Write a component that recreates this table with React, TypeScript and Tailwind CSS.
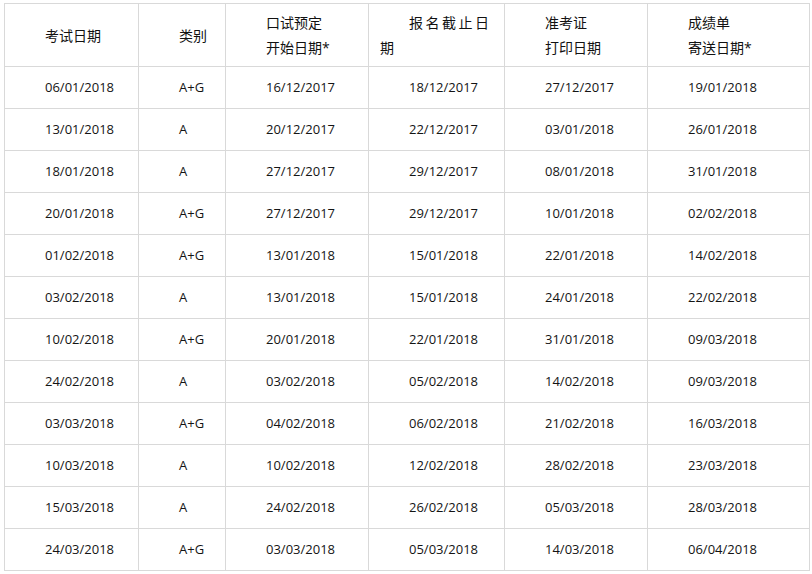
const rows = [
  ["06/01/2018", "A+G", "16/12/2017", "18/12/2017", "27/12/2017", "19/01/2018"],
  ["13/01/2018", "A", "20/12/2017", "22/12/2017", "03/01/2018", "26/01/2018"],
  ["18/01/2018", "A", "27/12/2017", "29/12/2017", "08/01/2018", "31/01/2018"],
  ["20/01/2018", "A+G", "27/12/2017", "29/12/2017", "10/01/2018", "02/02/2018"],
  ["01/02/2018", "A+G", "13/01/2018", "15/01/2018", "22/01/2018", "14/02/2018"],
  ["03/02/2018", "A", "13/01/2018", "15/01/2018", "24/01/2018", "22/02/2018"],
  ["10/02/2018", "A+G", "20/01/2018", "22/01/2018", "31/01/2018", "09/03/2018"],
  ["24/02/2018", "A", "03/02/2018", "05/02/2018", "14/02/2018", "09/03/2018"],
  ["03/03/2018", "A+G", "04/02/2018", "06/02/2018", "21/02/2018", "16/03/2018"],
  ["10/03/2018", "A", "10/02/2018", "12/02/2018", "28/02/2018", "23/03/2018"],
  ["15/03/2018", "A", "24/02/2018", "26/02/2018", "05/03/2018", "28/03/2018"],
  ["24/03/2018", "A+G", "03/03/2018", "05/03/2018", "14/03/2018", "06/04/2018"],
];

const th = "border border-[#d9d9d9] pl-[40px] pr-2 text-left font-normal align-middle leading-[25px]";
const td = "border border-[#d9d9d9] pl-[40px] pr-2 text-left align-middle";

export default function App() {
  return (
    <div className="min-h-[574px] bg-white pt-[3px] pl-[4px] font-['Open_Sans','Noto_Sans_CJK_SC',sans-serif] text-[#111]">
      <table className="w-[805px] table-fixed border-collapse">
        <colgroup>
          <col className="w-[134px]" />
          <col className="w-[87px]" />
          <col className="w-[143px]" />
          <col className="w-[136px]" />
          <col className="w-[143px]" />
          <col className="w-[162px]" />
        </colgroup>
        <thead>
          <tr className="h-[63px] text-[14px]">
            <th className={th}>考试日期</th>
            <th className={th}>类别</th>
            <th className={th}>
              口试预定
              <br />
              开始日期*
            </th>
            <th className="border border-[#d9d9d9] pl-[11px] pr-1 text-left font-normal align-middle leading-[25px]">
              <span className="pl-[29px] tracking-[2.5px]">报名截止日</span>
              <br />
              期
            </th>
            <th className={th}>
              准考证
              <br />
              打印日期
            </th>
            <th className={th}>
              成绩单
              <br />
              寄送日期*
            </th>
          </tr>
        </thead>
        <tbody className="text-[13px] text-[#141414]">
          {rows.map((r, i) => (
            <tr key={i} className="h-[42px]">
              {r.map((c, j) => (
                <td key={j} className={td}>
                  {c}
                </td>
              ))}
            </tr>
          ))}
        </tbody>
      </table>
    </div>
  );
}
